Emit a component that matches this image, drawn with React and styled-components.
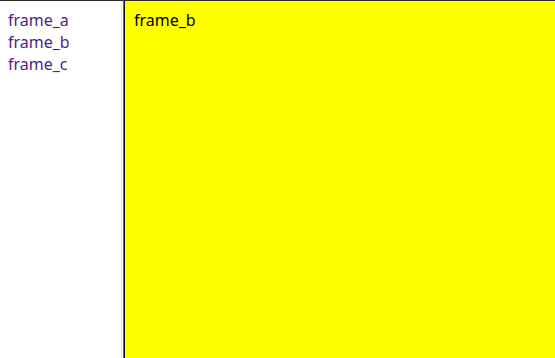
import React from "react";
import styled, { createGlobalStyle } from "styled-components";

const GlobalStyle = createGlobalStyle`
  html, body {
    margin: 0;
    padding: 0;
    height: 100%;
  }
  body {
    font-family: "Noto Sans", "Liberation Sans", sans-serif;
    font-size: 16px;
  }
  #root {
    height: 100%;
  }
`;

const Frameset = styled.div`
  display: flex;
  height: 358px;
  border-top: 1px solid #2b2b2b;
  box-sizing: border-box;
`;

const Nav = styled.div`
  width: 121px;
  flex-shrink: 0;
  background: #fff;
  padding: 8px;
  box-sizing: border-box;
`;

const Divider = styled.div`
  width: 4px;
  flex-shrink: 0;
  background: linear-gradient(
    to right,
    #efe6ef 0 1px,
    #fff 1px 2px,
    #6a6a6a 2px 3px,
    #111 3px 4px
  );
`;

const Main = styled.div`
  flex: 1;
  background: #ffff00;
  padding: 8px 9px;
  color: #000;
  line-height: 22px;
`;

const NavLink = styled.a`
  display: block;
  color: #551a8b;
  text-decoration: none;
  line-height: 22px;
`;

const links = ["frame_a", "frame_b", "frame_c"];

export default function App() {
  return (
    <>
      <GlobalStyle />
      <Frameset>
        <Nav>
          {links.map((name) => (
            <NavLink key={name} href={`#${name}`}>
              {name}
            </NavLink>
          ))}
        </Nav>
        <Divider />
        <Main>frame_b</Main>
      </Frameset>
    </>
  );
}
